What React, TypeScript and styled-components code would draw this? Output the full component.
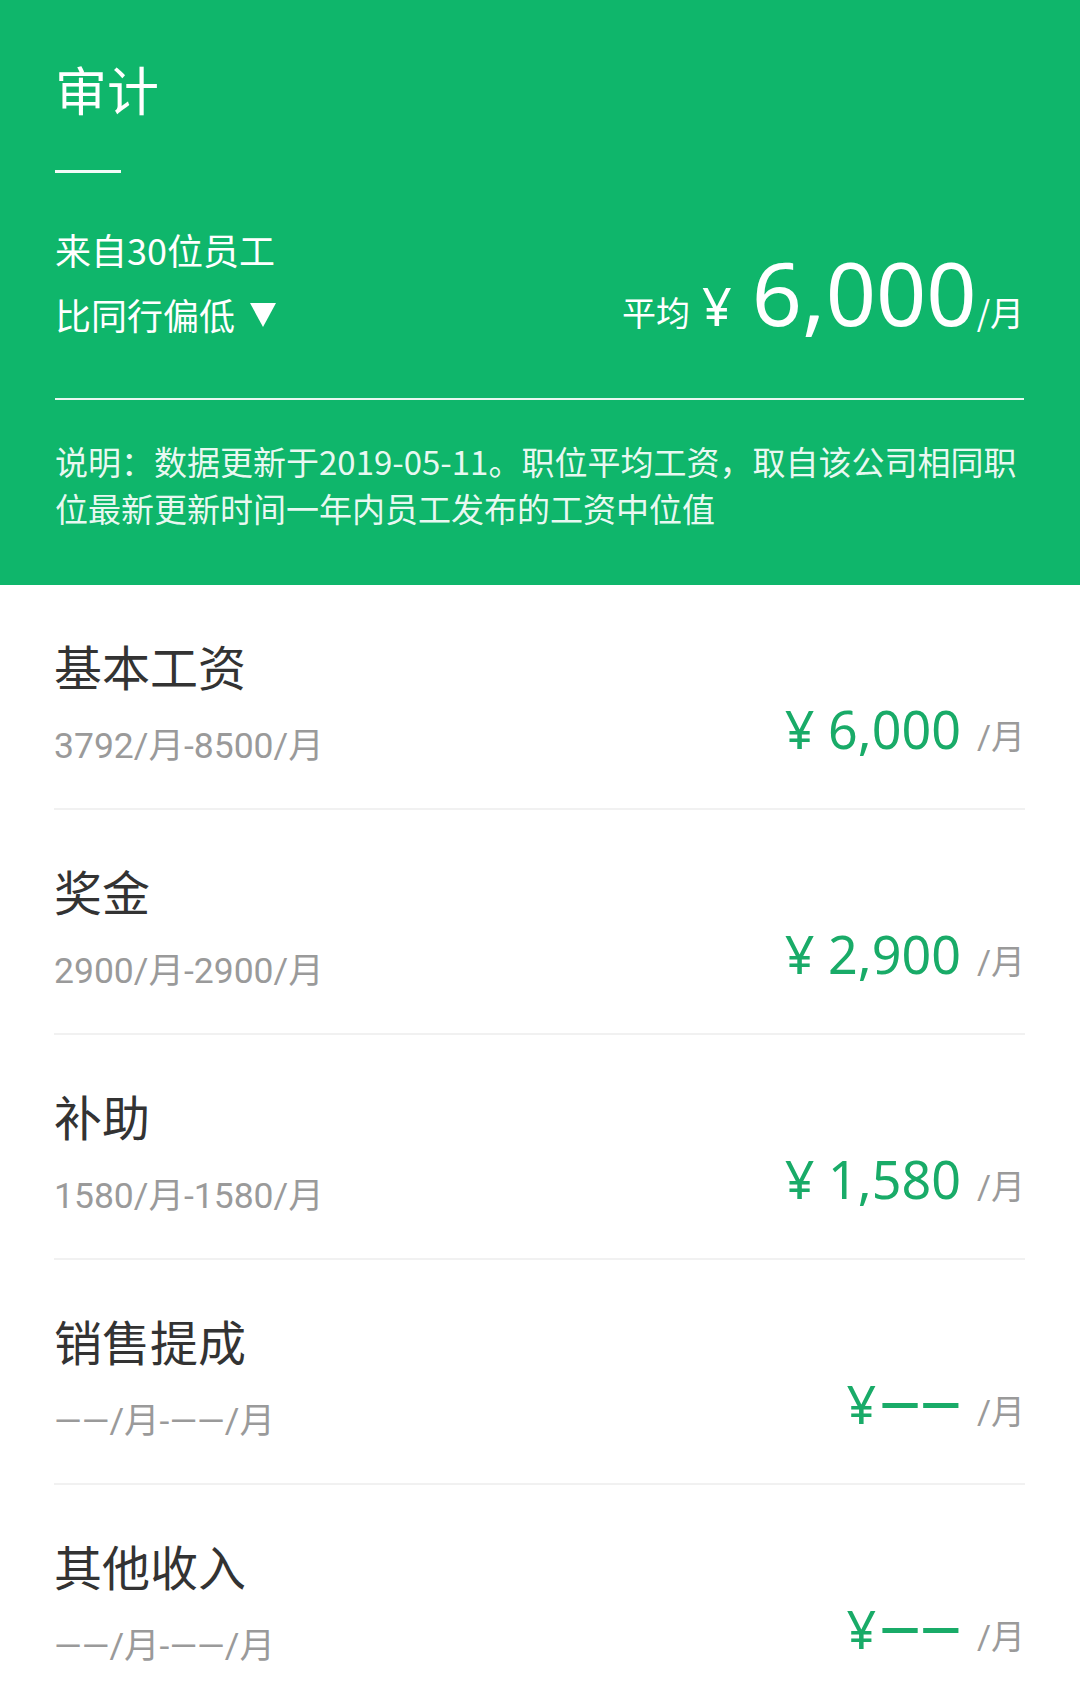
import React from "react";
import styled, { createGlobalStyle } from "styled-components";

const GlobalStyle = createGlobalStyle`
  html, body {
    margin: 0;
    padding: 0;
    background: #ffffff;
  }
  body {
    width: 1080px;
    font-family: "Noto Sans CJK SC", Roboto, sans-serif;
    -webkit-font-smoothing: antialiased;
  }
  * { box-sizing: border-box; }
`;

const CJK = `"Noto Sans CJK SC", sans-serif`;
const SUB = `Roboto, "Noto Sans CJK SC", sans-serif`;
const NUM = `"Noto Sans", "Noto Sans CJK SC", sans-serif`;

const GREEN = "#0fb66b";
const AMOUNT_GREEN = "#19ab68";

const Page = styled.div`
  width: 1080px;
  background: #fff;
`;

const Header = styled.header`
  background: ${GREEN};
  color: #ffffff;
  padding: 59px 56px 53px 55px;
  display: flex;
  flex-direction: column;
`;

const Title = styled.h1`
  margin: 0;
  font-family: ${CJK};
  font-weight: 400;
  font-size: 52px;
  line-height: 60px;
`;

const ShortRule = styled.div`
  margin-top: 51px;
  width: 66px;
  height: 3px;
  background: rgba(255, 255, 255, 0.95);
`;

const Summary = styled.div`
  display: flex;
  justify-content: space-between;
  align-items: flex-end;
  margin-top: 52px;
`;

const SummaryLeft = styled.div`
  display: flex;
  flex-direction: column;
  gap: 17px;
`;

const MetaLine = styled.div`
  font-family: ${CJK};
  font-size: 36px;
  line-height: 48px;
  display: flex;
  align-items: center;
`;

const Triangle = styled.svg`
  margin-left: 15px;
  width: 26px;
  height: 24px;
  margin-top: 2px;
`;

const Average = styled.div`
  display: flex;
  align-items: baseline;
  margin-bottom: -19px;
  line-height: 90px;
`;

const AvgLabel = styled.span`
  font-family: ${CJK};
  font-size: 34px;
  margin-right: 12px;
`;

const AvgYen = styled.span`
  font-family: ${NUM};
  font-size: 52px;
  margin-right: 20px;
`;

const AvgValue = styled.span`
  font-family: ${NUM};
  font-size: 88px;
`;

const AvgUnit = styled.span`
  font-family: ${CJK};
  font-size: 34px;
  margin-left: 0;
`;

const Divider = styled.div`
  margin-top: 60px;
  height: 2px;
  background: rgba(255, 255, 255, 0.9);
`;

const Note = styled.p`
  margin: 38px 0 0;
  font-family: ${CJK};
  font-size: 33px;
  line-height: 47px;
  color: rgba(255, 255, 255, 0.92);
`;

const List = styled.section`
  padding: 0 55px 0 54px;
`;

const Row = styled.div`
  height: 225px;
  padding: 50px 0 38px;
  border-bottom: 2px solid #f1f1f1;
  display: flex;
  justify-content: space-between;
  align-items: flex-end;
`;

const RowLeft = styled.div`
  display: flex;
  flex-direction: column;
  gap: 27px;
`;

const RowTitle = styled.div`
  font-family: ${CJK};
  font-size: 48px;
  line-height: 60px;
  color: #333333;
`;

const RowRange = styled.div`
  font-family: ${SUB};
  font-size: 35.5px;
  line-height: 48px;
  color: #9a9a9a;
`;

const Amount = styled.div`
  display: flex;
  align-items: baseline;
  line-height: 60px;
  margin-bottom: 3px;
`;

const AmountValue = styled.span`
  font-family: ${NUM};
  font-size: 52px;
  color: ${AMOUNT_GREEN};
  white-space: pre;
`;

const Dashes = styled.span`
  font-family: Roboto, sans-serif;
  font-weight: 500;
  font-size: 53px;
  color: ${AMOUNT_GREEN};
  margin-left: 3px;
`;

const AmountUnit = styled.span`
  font-family: ${SUB};
  font-size: 34px;
  color: #9a9a9a;
  margin-left: 16px;
`;

type Item = { title: string; range: string; value: string | null };

const items: Item[] = [
  { title: "基本工资", range: "3792/月-8500/月", value: "6,000" },
  { title: "奖金", range: "2900/月-2900/月", value: "2,900" },
  { title: "补助", range: "1580/月-1580/月", value: "1,580" },
  { title: "销售提成", range: "——/月-——/月", value: null },
  { title: "其他收入", range: "——/月-——/月", value: null },
];

export default function App() {
  return (
    <Page>
      <GlobalStyle />
      <Header>
        <Title>审计</Title>
        <ShortRule />
        <Summary>
          <SummaryLeft>
            <MetaLine>来自30位员工</MetaLine>
            <MetaLine>
              比同行偏低
              <Triangle viewBox="0 0 26 24">
                <path d="M0 0 H26 L13 24 Z" fill="#ffffff" />
              </Triangle>
            </MetaLine>
          </SummaryLeft>
          <Average>
            <AvgLabel>平均</AvgLabel>
            <AvgYen>¥</AvgYen>
            <AvgValue>6,000</AvgValue>
            <AvgUnit>/月</AvgUnit>
          </Average>
        </Summary>
        <Divider />
        <Note>
          说明：数据更新于2019-05-11。职位平均工资，取自该公司相同职位最新更新时间一年内员工发布的工资中位值
        </Note>
      </Header>
      <List>
        {items.map((it) => (
          <Row key={it.title}>
            <RowLeft>
              <RowTitle>{it.title}</RowTitle>
              <RowRange>{it.range}</RowRange>
            </RowLeft>
            <Amount>
              {it.value ? (
                <AmountValue>{`¥ ${it.value}`}</AmountValue>
              ) : (
                <>
                  <AmountValue>¥</AmountValue>
                  <Dashes>——</Dashes>
                </>
              )}
              <AmountUnit>/月</AmountUnit>
            </Amount>
          </Row>
        ))}
      </List>
    </Page>
  );
}
